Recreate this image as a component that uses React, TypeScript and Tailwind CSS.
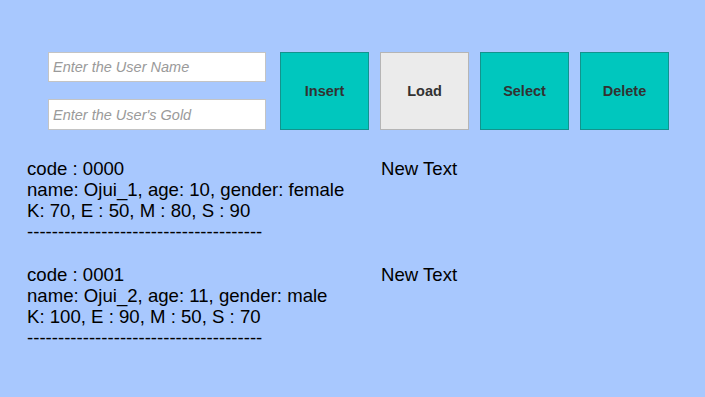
const records = [
  { code: "0000", name: "Ojui_1", age: 10, gender: "female", stats: "K: 70, E : 50, M : 80, S : 90" },
  { code: "0001", name: "Ojui_2", age: 11, gender: "male", stats: "K: 100, E : 90, M : 50, S : 70" },
];

const buttons = [
  { label: "Insert", active: true },
  { label: "Load", active: false },
  { label: "Select", active: true },
  { label: "Delete", active: true },
];

export default function App() {
  return (
    <div className="w-[705px] h-[397px] bg-[#a8c8fe] overflow-hidden font-['Liberation_Sans',Arial,sans-serif] text-black">
      <div className="flex pt-[52px] pl-[48px]">
        <div className="flex flex-col gap-[17px] w-[218px]">
          <input
            placeholder="Enter the User Name"
            className="h-[30px] bg-white border border-[#c4c4c4] px-[4px] text-[14.5px] italic placeholder:text-[#9a9a9a] outline-none"
          />
          <input
            placeholder="Enter the User's Gold"
            className="h-[31px] bg-white border border-[#c4c4c4] px-[4px] text-[14.5px] italic placeholder:text-[#9a9a9a] outline-none"
          />
        </div>
        <div className="flex gap-[11px] ml-[14px]">
          {buttons.map((b) => (
            <button
              key={b.label}
              className={
                b.active
                  ? "w-[89px] h-[78px] pt-[2px] bg-[#00c7be] border border-[#13938d] text-[14.5px] font-bold text-[#323232]"
                  : "w-[89px] h-[78px] pt-[2px] bg-[#ebebeb] border border-[#b5b5b5] text-[14.5px] font-bold text-[#323232]"
              }
            >
              {b.label}
            </button>
          ))}
        </div>
      </div>
      <div className="flex flex-col gap-[22px] mt-[28px] pl-[27px]">
        {records.map((r) => (
          <div key={r.code} className="flex text-[18.6px] leading-[21px]">
            <div className="w-[354px]">
              <div>code : {r.code}</div>
              <div>name: {r.name}, age: {r.age}, gender: {r.gender}</div>
              <div>{r.stats}</div>
              <div>--------------------------------------</div>
            </div>
            <div>New Text</div>
          </div>
        ))}
      </div>
    </div>
  );
}
